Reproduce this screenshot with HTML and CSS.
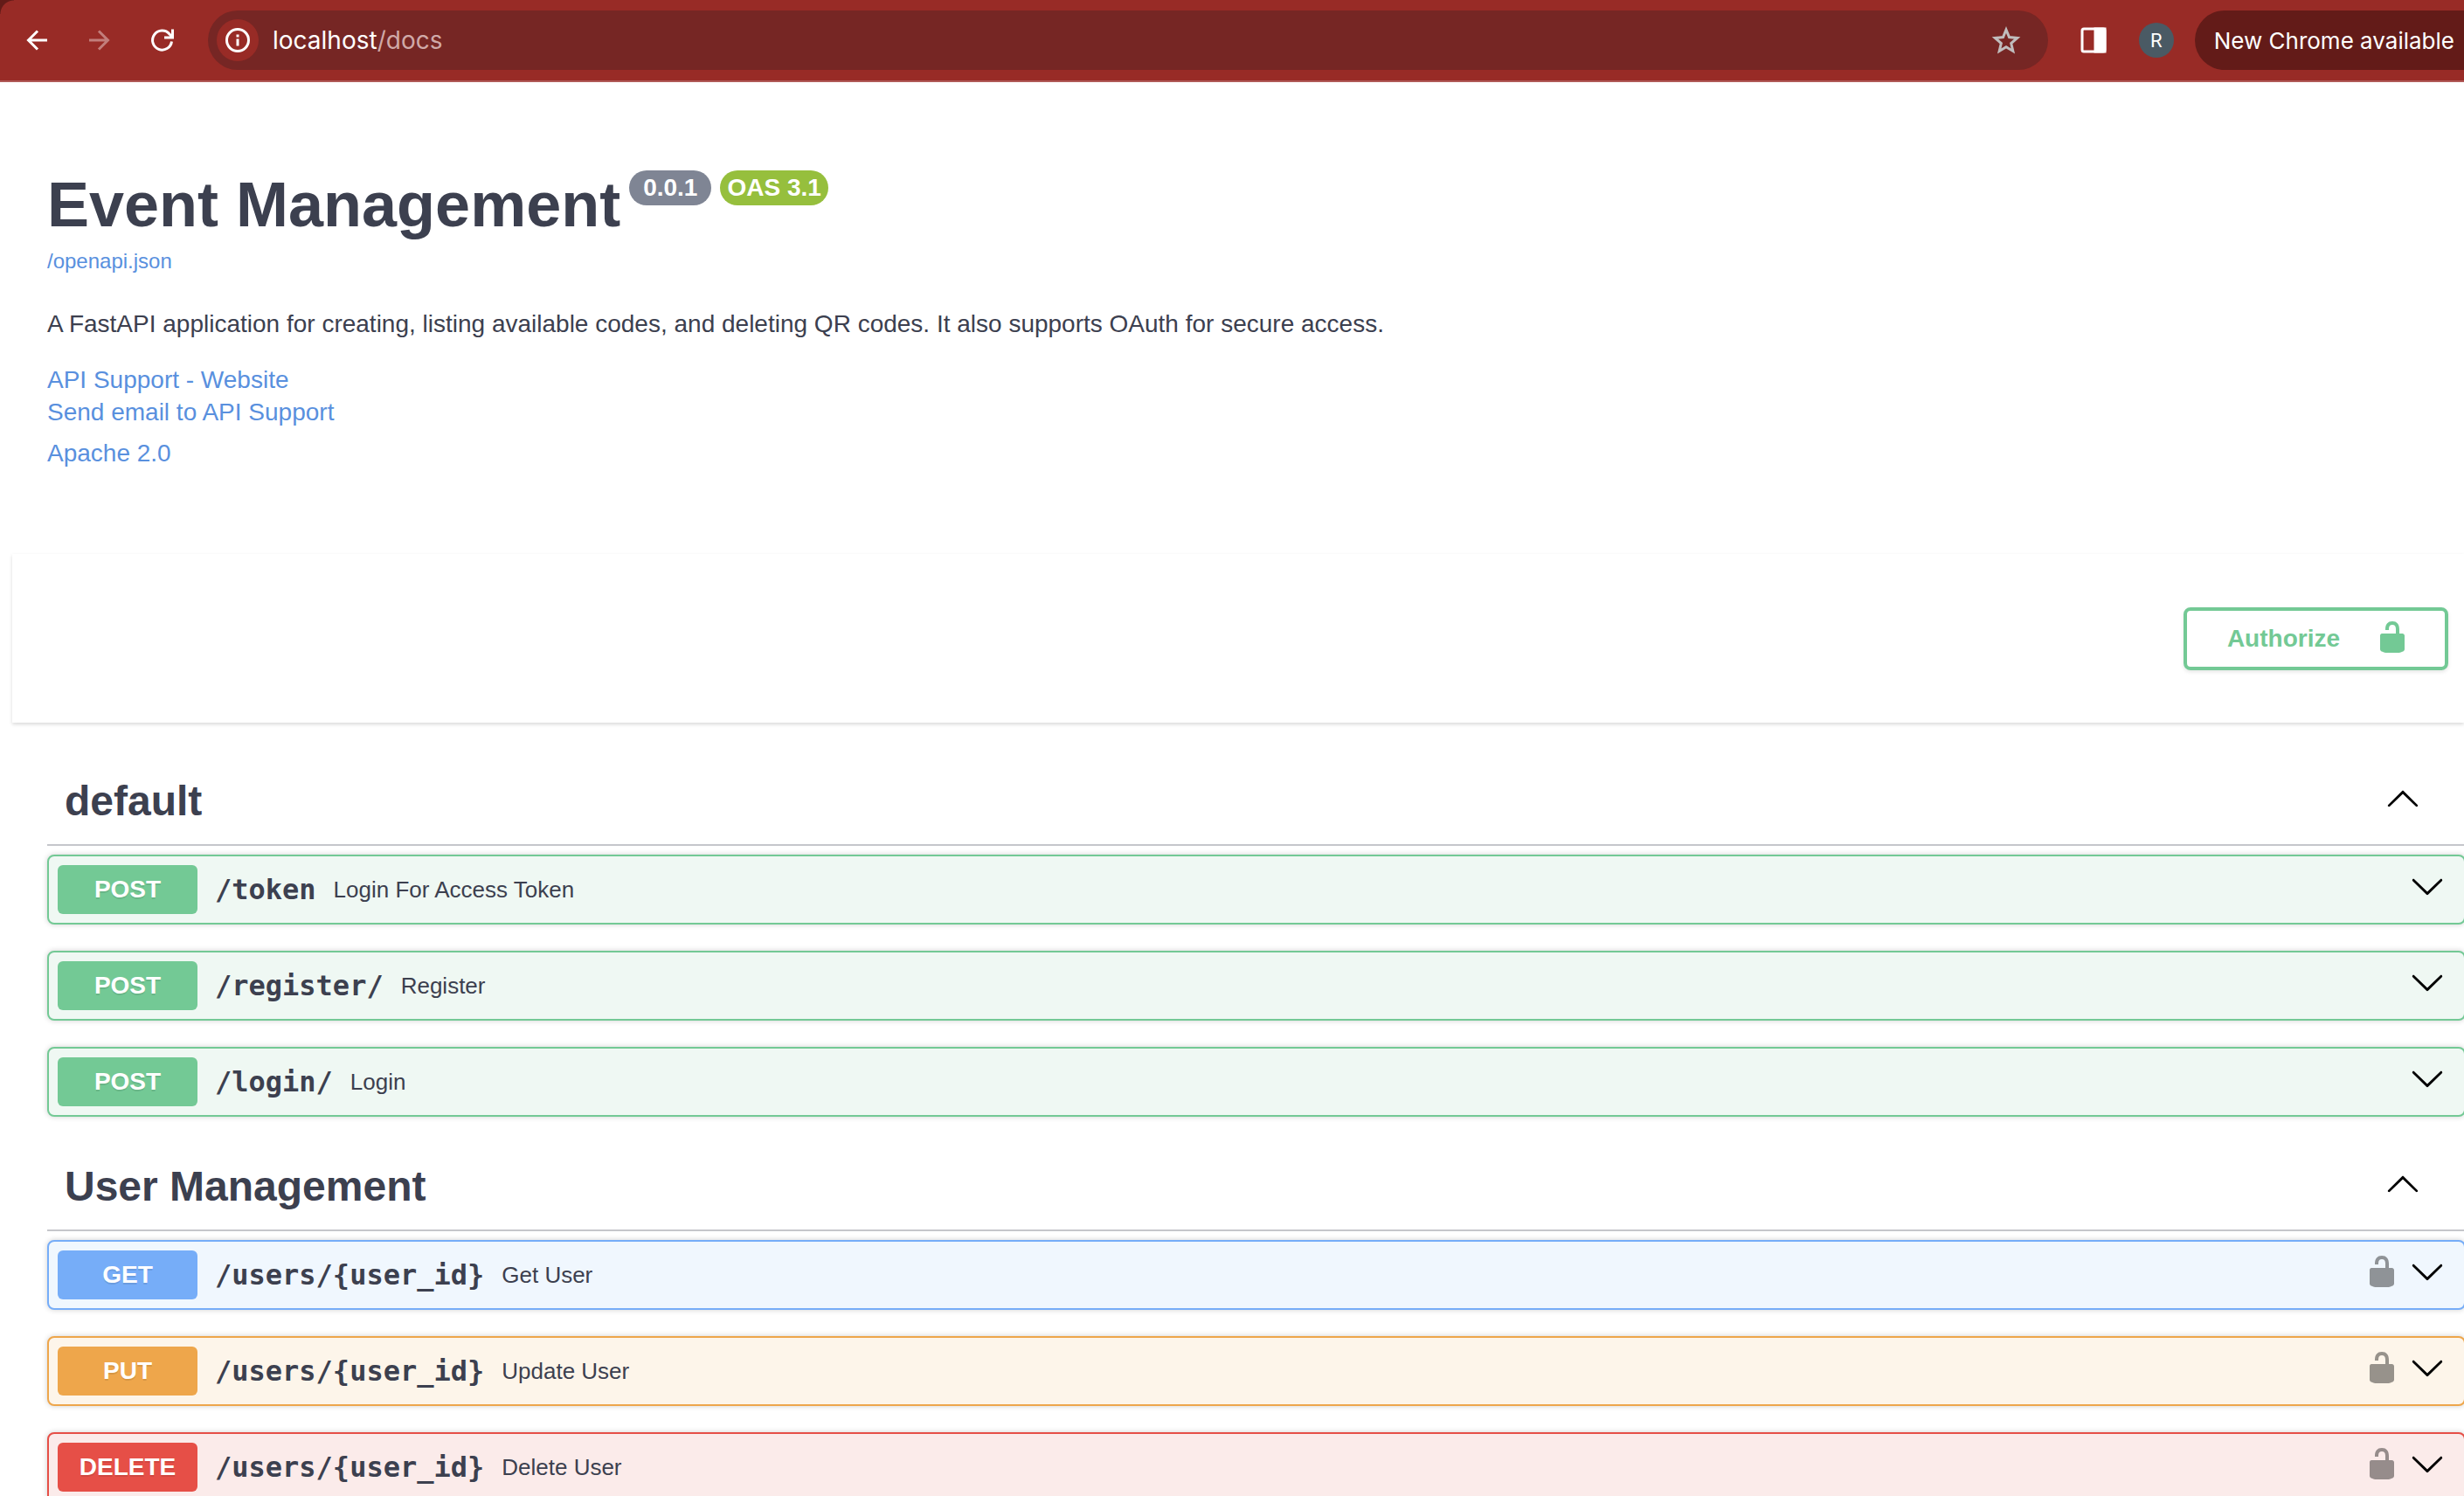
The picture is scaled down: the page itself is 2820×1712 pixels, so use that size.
FILE: index.html
```html
<!DOCTYPE html>
<html lang="en">
<head>
<meta charset="utf-8">
<title>Event Management</title>
<link rel="stylesheet" href="styles.css">
</head>
<body>
<svg class="defs" aria-hidden="true">
  <symbol id="unlocked" viewBox="0 0 20 20"><path d="M15.8 8H14V5.6C14 2.703 12.665 1 10 1 7.334 1 6 2.703 6 5.6V6h2v-.801C8 3.754 8.797 3 10 3c1.203 0 2 .754 2 2.199V8H4c-.553 0-1 .646-1 1.199V17c0 .549.428 1.139.951 1.307l1.197.387C5.672 18.861 6.55 19 7.1 19h5.8c.549 0 1.428-.139 1.951-.307l1.196-.387c.524-.167.953-.757.953-1.306V9.199C17 8.646 16.352 8 15.8 8z"/></symbol>
  <symbol id="up" viewBox="0 0 20 20"><path d="M17.418 14.908c.272.268.709.268.979 0s.271-.701 0-.969l-7.908-7.83c-.27-.268-.707-.268-.979 0l-7.908 7.83c-.27.268-.27.701 0 .969.271.268.709.268.979 0L10 7.767l7.418 7.141z"/></symbol>
  <symbol id="down" viewBox="0 0 20 20"><path d="M17.418 6.109c.272-.268.709-.268.979 0s.271.701 0 .969l-7.908 7.83c-.27.268-.707.268-.979 0l-7.908-7.83c-.27-.268-.27-.701 0-.969.271-.268.709-.268.979 0L10 13.25l7.418-7.141z"/></symbol>
</svg>

<header class="browser">
  <nav class="nav">
    <button class="nav-btn" aria-label="Back"><svg viewBox="0 0 32 32"><path d="M28 16H7M17 5.500 6.500 16 17 26.500" /></svg></button>
    <button class="nav-btn dim" aria-label="Forward" disabled><svg viewBox="0 0 32 32"><path d="M4 16h21M15 5.500 25.500 16 15 26.500" /></svg></button>
    <button class="nav-btn" aria-label="Reload"><svg viewBox="0 0 32 32"><path d="M26.500 17.500A11 11 0 1 1 24 9L27 12M27.500 3.500v9.500h-9.500" /></svg></button>
  </nav>
  <div class="address">
    <button class="site-info" aria-label="Site information"><svg viewBox="0 0 28 28"><circle cx="14" cy="14" r="12.500"/><path d="M14 12.500v8M14 7.500v3"/></svg></button>
    <a class="url" href="#">localhost<span>/docs</span></a>
    <button class="star" aria-label="Bookmark this page"><svg viewBox="0 0 36 36"><path d="M18 6l3.500 8.600 9.200.8-7 6.100 2.100 9-7.800-4.700-7.800 4.700 2.100-9-7-6.100 9.200-.8z"/></svg></button>
  </div>
  <button class="panel-btn" aria-label="Side panel"><svg viewBox="0 0 30 30"><rect x="2" y="2" width="26" height="26" rx="2"/><path d="M17 2h11v26H17z" fill="#fff"/></svg></button>
  <button class="avatar">R</button>
  <button class="update">New Chrome available</button>
</header>

<main>
  <section class="info">
    <div class="title-row">
      <h1>Event Management</h1>
      <span class="badge version">0.0.1</span>
      <span class="badge oas">OAS 3.1</span>
    </div>
    <a class="spec" href="#">/openapi.json</a>
    <p class="description">A FastAPI application for creating, listing available codes, and deleting QR codes. It also supports OAuth for secure access.</p>
    <div class="contact">
      <a href="#">API Support - Website</a>
      <a href="#">Send email to API Support</a>
    </div>
    <a class="license" href="#">Apache 2.0</a>
  </section>

  <section class="scheme">
    <button class="authorize"><span>Authorize</span><svg><use href="#unlocked"/></svg></button>
  </section>

  <div class="operations">
    <section>
      <div class="tag"><h2>default</h2><button class="icon-btn" aria-label="Collapse default"><svg><use href="#up"/></svg></button></div>
      <div class="op post"><span class="method">POST</span><a class="path" href="#">/token</a><span class="summary">Login For Access Token</span><button class="icon-btn" aria-label="Expand"><svg><use href="#down"/></svg></button></div>
      <div class="op post"><span class="method">POST</span><a class="path" href="#">/register/</a><span class="summary">Register</span><button class="icon-btn" aria-label="Expand"><svg><use href="#down"/></svg></button></div>
      <div class="op post"><span class="method">POST</span><a class="path" href="#">/login/</a><span class="summary">Login</span><button class="icon-btn" aria-label="Expand"><svg><use href="#down"/></svg></button></div>
    </section>
    <section>
      <div class="tag"><h2>User Management</h2><button class="icon-btn" aria-label="Collapse User Management"><svg><use href="#up"/></svg></button></div>
      <div class="op get"><span class="method">GET</span><a class="path" href="#">/users/{user_id}</a><span class="summary">Get User</span><button class="icon-btn lock" aria-label="Authorize"><svg><use href="#unlocked"/></svg></button><button class="icon-btn" aria-label="Expand"><svg><use href="#down"/></svg></button></div>
      <div class="op put"><span class="method">PUT</span><a class="path" href="#">/users/{user_id}</a><span class="summary">Update User</span><button class="icon-btn lock" aria-label="Authorize"><svg><use href="#unlocked"/></svg></button><button class="icon-btn" aria-label="Expand"><svg><use href="#down"/></svg></button></div>
      <div class="op delete"><span class="method">DELETE</span><a class="path" href="#">/users/{user_id}</a><span class="summary">Delete User</span><button class="icon-btn lock" aria-label="Authorize"><svg><use href="#unlocked"/></svg></button><button class="icon-btn" aria-label="Expand"><svg><use href="#down"/></svg></button></div>
    </section>
  </div>
</main>
</body>
</html>
```
FILE: styles.css
```css
* { box-sizing: border-box; }
html { height: 100%; overflow: hidden; }
body {
  margin: 0;
  height: 100%;
  overflow: hidden;
  background: #fff;
  color: #3c404f;
  font-family: "Liberation Sans", Arial, sans-serif;
  font-size: 28px;
}
button { padding: 0; border: 0; background: none; font: inherit; color: inherit; }
svg { display: block; fill: currentColor; }
a { color: #5990de; text-decoration: none; }
h1, h2, p { margin: 0; }
.defs { display: none; }

/* Browser toolbar */
.browser {
  display: flex;
  align-items: center;
  height: 94px;
  padding-left: 26px;
  border-bottom: 2px solid #b05a57;
  background: radial-gradient(circle at 16px 16px, #982b26 15px, #631b18 16px) 0 0 / 16px 16px no-repeat, #982b26;
  color: #fff;
  font-family: Inter, sans-serif;
  overflow: hidden;
}
.nav { display: flex; gap: 40px; margin-right: 36px; }
.nav-btn svg { width: 32px; height: 32px; fill: none; stroke: currentColor; stroke-width: 3; }
.nav-btn.dim { color: #c27e7b; }
.address {
  display: flex;
  flex: 1;
  align-items: center;
  height: 68px;
  padding: 0 30px 0 10px;
  border-radius: 34px;
  background: #762624;
}
.site-info { display: grid; place-items: center; width: 48px; height: 48px; border-radius: 50%; background: #982b26; }
.site-info svg { width: 28px; height: 28px; fill: none; stroke: #fff; stroke-width: 3; }
.url { flex: 1; margin-left: 16px; color: #fff; }
.url span { color: #d0a9a8; }
.star { color: #c0bdbd; }
.star svg { width: 36px; height: 36px; fill: none; stroke: currentColor; stroke-width: 3; }
.panel-btn { margin: 0 37px; }
.panel-btn svg { width: 30px; height: 30px; fill: none; stroke: #fff; stroke-width: 3; }
.avatar { width: 40px; height: 40px; border-radius: 50%; background: #4a5a64; font-family: Roboto, sans-serif; font-size: 22px; }
.update {
  height: 68px;
  margin-left: 24px;
  padding: 0 11px 0 22px;
  border-radius: 34px 0 0 34px;
  background: #631b18;
  font-size: 26px;
  white-space: nowrap;
}

/* API information */
.info { padding: 101px 54px 97px; }
.title-row { display: flex; align-items: flex-start; gap: 10px; }
h1 { font-size: 72px; line-height: 78px; }
.badge { height: 40px; border-radius: 20px; color: #fff; font-weight: bold; line-height: 40px; }
.version { padding: 0 16px; background: #7f8594; }
.oas { padding: 0 8px; background: #96bf3d; }
.spec { display: block; margin-top: 6px; font-size: 24px; line-height: 40px; }
.description { margin-top: 32px; line-height: 40px; }
.contact { display: flex; flex-direction: column; align-items: flex-start; margin-top: 25px; line-height: 37px; }
.license { display: block; margin-top: 10px; line-height: 37px; }

.scheme {
  display: flex;
  justify-content: flex-end;
  margin-left: 14px;
  padding: 61px 18px 60px;
  box-shadow: 0 2px 4px rgba(0, 0, 0, .15);
}
.authorize {
  display: flex;
  align-items: center;
  gap: 40px;
  height: 72px;
  padding: 0 40px 0 46px;
  border: 4px solid #73c995;
  border-radius: 8px;
  box-shadow: 0 2px 4px rgba(0, 0, 0, .1);
  color: #73c995;
  font-weight: bold;
}
.authorize svg, .icon-btn svg { width: 40px; height: 40px; }
.authorize svg { margin-bottom: 4px; }

/* Operations */
.operations { padding: 40px 0 0 54px; }
.tag {
  display: flex;
  align-items: flex-start;
  justify-content: space-between;
  margin-bottom: 10px;
  padding: 22px 50px 22px 20px;
  border-bottom: 2px solid #c5c6cb;
}
.tag h2 { font-size: 48px; line-height: 55px; }
.tag .icon-btn { margin-top: 4px; }
.icon-btn { color: #000; }
.op {
  display: flex;
  align-items: center;
  height: 80px;
  margin: 0 -2px 30px 0;
  padding: 0 22px 0 10px;
  border: 2px solid;
  border-radius: 8px;
  box-shadow: 0 0 6px rgba(0, 0, 0, .19);
}
.op .icon-btn { align-self: flex-start; margin-top: 14px; }
.op .lock { margin-right: 12px; opacity: .4; }
.method {
  width: 160px;
  border-radius: 6px;
  color: #fff;
  font-weight: bold;
  line-height: 56px;
  text-align: center;
  text-shadow: 0 2px 0 rgba(0, 0, 0, .1);
}
.path { padding: 0 20px; font: bold 32px "DejaVu Sans Mono", monospace; }
.path, .summary { color: #3c404f; }
.summary { flex: 1; font-size: 26px; }
.post { border-color: #73c995; background: #eff8f3; }
.post .method { background: #73c995; }
.get { border-color: #76adf8; background: #f0f7fe; }
.get .method { background: #76adf8; }
.put { border-color: #eea64b; background: #fdf5ea; }
.put .method { background: #eea64b; }
.delete { border-color: #e64f47; background: #fbebea; }
.delete .method { background: #e64f47; }
```
